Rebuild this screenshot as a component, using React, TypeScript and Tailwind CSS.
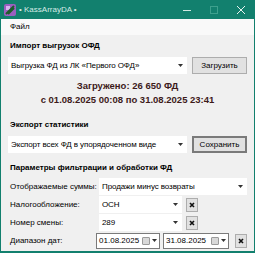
import React from 'react';

const font = { fontFamily: '"Liberation Sans", Arial, sans-serif' };

const Combo = ({ text, className }: { text: string; className: string }) => (
  <div className={`h-[17px] bg-white flex items-center ${className}`}>
    <span className="flex-1 pl-[3px] text-[8px] tracking-[-0.1px] text-black whitespace-nowrap overflow-hidden">{text}</span>
    <span className="w-[14px] h-full flex items-center justify-center">
      <svg width="5" height="3" viewBox="0 0 5 3"><path d="M0 0h5L2.5 3z" fill="#333" /></svg>
    </span>
  </div>
);

const Button = ({ label, def }: { label: string; def?: boolean }) => (
  <div
    className={`w-[55px] h-[17px] bg-[#e1e1e1] flex items-center justify-center text-[8px] text-black ${
      def ? 'border-2 border-[#7a7a7a]' : 'border border-[#adadad]'
    }`}
  >
    {label}
  </div>
);

const ClearBtn = () => (
  <div className="w-[12px] h-[14px] bg-[#e1e1e1] border border-[#adadad] flex items-center justify-center">
    <svg width="6" height="6" viewBox="0 0 6 6"><path d="M1 1l4 4M5 1l-4 4" stroke="#111" strokeWidth="1.6" /></svg>
  </div>
);

const DateBox = ({ text }: { text: string }) => (
  <div className="w-[66px] h-[16px] bg-white border border-[#7a7a7a] flex items-center">
    <span className="flex-1 pl-[2px] text-[8px] text-black">{text}</span>
    <span className="w-[8px] h-[8px] bg-[#d8d8d8] border border-[#9a9a9a] rounded-[1px]"></span>
    <svg className="mx-[2px]" width="5" height="3" viewBox="0 0 5 3"><path d="M0 0h5L2.5 3z" fill="#333" /></svg>
  </div>
);

export default function App() {
  return (
    <div className="w-[255px] h-[253px] bg-[#12806e] px-px pb-[2px] flex flex-col overflow-hidden" style={font}>
      {/* Title bar */}
      <div className="h-[19px] flex items-center text-[8px]">
        <svg className="ml-[3px]" width="12" height="12" viewBox="0 0 12 12">
          <rect x="0" y="0" width="12" height="12" rx="2" fill="#9b5fc0" />
          <rect x="2" y="2" width="4" height="4" fill="#d8b4f0" />
          <path d="M2 10l8-8M4 10l6-6" stroke="#1c5e2a" strokeWidth="2" />
        </svg>
        <span className="ml-[3px] text-[#d6ebe6]">• KassArrayDA •</span>
        <div className="flex-1" />
        <svg width="8" height="8" viewBox="0 0 8 8" className="mr-[19px]"><path d="M0 4.5h8" stroke="#d0e8e2" strokeWidth="1" /></svg>
        <svg width="8" height="8" viewBox="0 0 8 8" className="mr-[19px]"><rect x="0.5" y="0.5" width="7" height="7" fill="none" stroke="#3da08d" strokeWidth="1" /></svg>
        <svg width="8" height="8" viewBox="0 0 8 8" className="mr-[9px]"><path d="M0 0l8 8M8 0L0 8" stroke="#e6f3f0" strokeWidth="1" /></svg>
      </div>
      {/* Menu */}
      <div className="h-[16px] bg-[#f9f9f9] flex items-center pl-[9px] text-[8px] text-black">Файл</div>
      {/* Body */}
      <div className="flex-1 bg-[#f0f0f0] flex flex-col px-[7px] text-[8px] text-black">
        <div className="font-bold mt-[3px] pl-[2px] h-[16px] leading-[16px]">Импорт выгрузок ОФД</div>
        <div className="flex items-center gap-[5px] mt-[3px]">
          <Combo text="Выгрузка ФД из ЛК «Первого ОФД»" className="w-[179px]" />
          <Button label="Загрузить" />
        </div>
        <div className="flex flex-col items-center mt-[5px] font-bold text-[9.5px] text-[#3d1a1a] leading-[14px]">
          <span>Загружено: 26 650 ФД</span>
          <span>с 01.08.2025 00:08 по 31.08.2025 23:41</span>
        </div>
        <div className="font-bold mt-[10px] pl-[2px] h-[16px] leading-[16px]">Экспорт статистики</div>
        <div className="flex items-center gap-[5px] mt-[3px]">
          <Combo text="Экспорт всех ФД в упорядоченном виде" className="w-[179px]" />
          <Button label="Сохранить" def />
        </div>
        <div className="font-bold mt-[7px] pl-[2px] h-[16px] leading-[16px]">Параметры фильтрации и обработки ФД</div>
        <div className="flex items-center mt-[2px] h-[17px]">
          <span className="w-[91px] pl-[2px] whitespace-nowrap">Отображаемые суммы:</span>
          <Combo text="Продажи минус возвраты" className="w-[148px]" />
        </div>
        <div className="flex items-center mt-px h-[17px]">
          <span className="w-[91px] pl-[2px] whitespace-nowrap">Налогообложение:</span>
          <Combo text="ОСН" className="w-[83px]" />
          <div className="ml-[4px]"><ClearBtn /></div>
        </div>
        <div className="flex items-center mt-px h-[17px]">
          <span className="w-[91px] pl-[2px] whitespace-nowrap">Номер смены:</span>
          <Combo text="289" className="w-[83px]" />
          <div className="ml-[4px]"><ClearBtn /></div>
        </div>
        <div className="flex items-center mt-px h-[17px]">
          <span className="w-[91px] pl-[2px] whitespace-nowrap">Диапазон дат:</span>
          <DateBox text="01.08.2025" />
          <div className="ml-[3px]"><DateBox text="31.08.2025" /></div>
          <div className="ml-[6px]"><ClearBtn /></div>
        </div>
      </div>
    </div>
  );
}
